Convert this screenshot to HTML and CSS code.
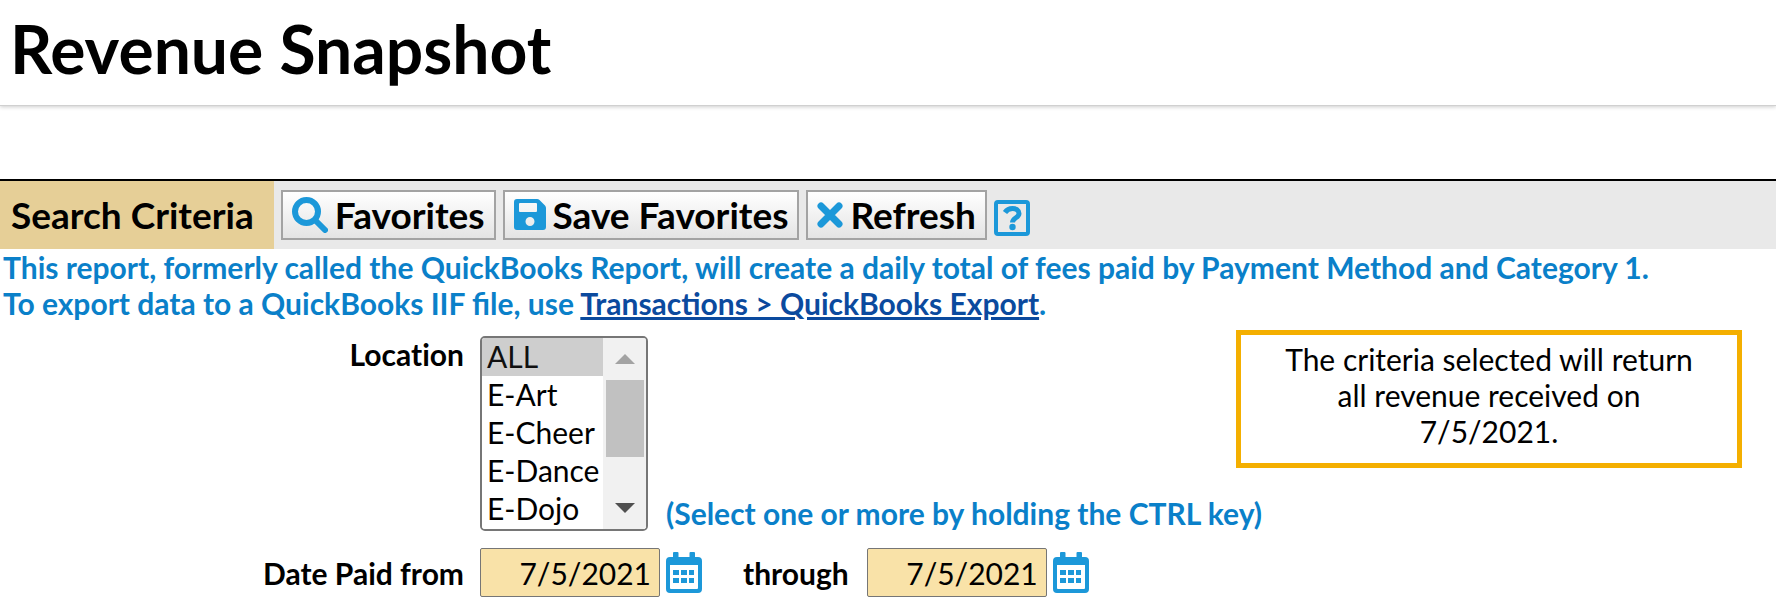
FILE: index.html
```html
<!DOCTYPE html>
<html lang="en">
<head>
  <meta charset="UTF-8" />
  <meta name="viewport" content="width=device-width, initial-scale=1.0"/>
  <title>Revenue Snapshot</title>
  <link rel="stylesheet" href="styles.css">
</head>
<body>
  <header class="page-header">
    <h1>Revenue Snapshot</h1>
  </header>

  <div class="toolbar">
    <h2>Search Criteria</h2>
    <div class="toolbar-actions">
      <button type="button" class="btn">
        <svg width="36" height="36" viewBox="0 0 36 36" aria-hidden="true">
          <circle cx="14.500" cy="14.500" r="11.500" fill="none" stroke="#1c98d9" stroke-width="6"/>
          <path d="M23 23l10 10" stroke="#1c98d9" stroke-width="6" stroke-linecap="round"/>
        </svg>
        <span>Favorites</span>
      </button>
      <button type="button" class="btn">
        <svg width="32" height="36" viewBox="0 0 32 36" aria-hidden="true">
          <path fill="#1c98d9" fill-rule="evenodd" d="M3 2h20q1.500 0 2.500 1l5.500 5.500q1 1 1 2.500v19q0 3-3 3H3q-3 0-3-3V5q0-3 3-3zM6 6q-1 0-1 1v7q0 1 1 1h16q1 0 1-1V7q0-1-1-1zM16 20a4.500 4.500 0 1 0 0 9a4.500 4.500 0 1 0 0-9z"/>
        </svg>
        <span>Save Favorites</span>
      </button>
      <button type="button" class="btn">
        <svg width="26" height="36" viewBox="0 0 26 36" aria-hidden="true">
          <path d="M4 9l18 18M22 9L4 27" stroke="#1c98d9" stroke-width="7" stroke-linecap="round"/>
        </svg>
        <span>Refresh</span>
      </button>
      <a href="#" class="help" aria-label="Help">
        <svg width="36" height="36" viewBox="0 0 36 36" fill="none" stroke="#1c98d9" aria-hidden="true">
          <rect x="2" y="2" width="32" height="32" rx="2" stroke-width="4"/>
          <path d="M11 12.500C13 9.500 15 8.500 18.500 8.500C22 8.500 25 10.500 25 13.500C25 18 18.500 17.500 18.500 22.500" stroke-width="5"/>
          <circle cx="18.500" cy="27" r="3.200" fill="#1c98d9" stroke="none"/>
        </svg>
      </a>
    </div>
  </div>

  <p class="intro">
    This report, formerly called the QuickBooks Report, will create a daily total of fees paid by Payment Method and Category 1.<br>
    To export data to a QuickBooks IIF file, use <a href="#">Transactions &gt; QuickBooks Export</a>.
  </p>

  <div class="criteria">
    <form class="fields">
      <label for="location" class="field-label">Location</label>
      <div class="field field-location">
        <div class="listbox">
          <select id="location" multiple size="5">
            <option selected>ALL</option>
            <option>E-Art</option>
            <option>E-Cheer</option>
            <option>E-Dance</option>
            <option>E-Dojo</option>
            <option>E-Gym</option>
            <option>E-Swim</option>
          </select>
          <div class="scrollbar" aria-hidden="true">
            <svg class="arrow-up" width="20" height="10" viewBox="0 0 20 10"><path d="M0 10L10 0L20 10z"/></svg>
            <div class="track"><div class="thumb"></div></div>
            <svg class="arrow-down" width="20" height="10" viewBox="0 0 20 10"><path d="M0 0L10 10L20 0z"/></svg>
          </div>
        </div>
        <span class="hint">(Select one or more by holding the CTRL key)</span>
      </div>

      <label for="date-from" class="field-label field-label-date">Date Paid from</label>
      <div class="field field-dates">
        <input type="text" id="date-from" value="7/5/2021">
        <button type="button" class="calendar" aria-label="Pick start date">
          <svg width="36" height="42" viewBox="0 0 36 42" fill="#1c98d9" aria-hidden="true">
            <path fill-rule="evenodd" d="M7 1q0-1 1-1h3.500q1 0 1 1v4h11V1q0-1 1-1H28q1 0 1 1v4h3q4 0 4 4v28q0 4-4 4H4q-4 0-4-4V9q0-4 4-4h3zM4 13v23q0 1 1 1h26q1 0 1-1V13z"/>
            <path d="M7 18h6v5H7zM15 18h6v5h-6zM23 18h5v5h-5zM7 26h6v5H7zM15 26h6v5h-6zM23 26h5v5h-5z"/>
          </svg>
        </button>
        <label for="date-to" class="through">through</label>
        <input type="text" id="date-to" value="7/5/2021">
        <button type="button" class="calendar" aria-label="Pick end date">
          <svg width="36" height="42" viewBox="0 0 36 42" fill="#1c98d9" aria-hidden="true">
            <path fill-rule="evenodd" d="M7 1q0-1 1-1h3.500q1 0 1 1v4h11V1q0-1 1-1H28q1 0 1 1v4h3q4 0 4 4v28q0 4-4 4H4q-4 0-4-4V9q0-4 4-4h3zM4 13v23q0 1 1 1h26q1 0 1-1V13z"/>
            <path d="M7 18h6v5H7zM15 18h6v5h-6zM23 18h5v5h-5zM7 26h6v5H7zM15 26h6v5h-6zM23 26h5v5h-5z"/>
          </svg>
        </button>
      </div>
    </form>

    <div class="notice">The criteria selected will return all revenue received on 7/5/2021.</div>
  </div>

  <script>
    const locationList = document.getElementById("location");
    const thumb = document.querySelector(".thumb");

    // keep the drawn thumb in step with the list
    locationList.addEventListener("scroll", () => {
      const range = locationList.scrollHeight - locationList.clientHeight;
      const free = thumb.parentElement.clientHeight - thumb.offsetHeight;
      thumb.style.marginTop = (locationList.scrollTop / range) * free + "px";
    });
  </script>
</body>
</html>
```
FILE: styles.css
```css
* {
  box-sizing: border-box;
}

body {
  margin: 0;
  font-family: Lato, sans-serif;
  font-size: 30px;
  line-height: 36px;
  color: #000;
  background: #fff;
}

svg {
  display: block;
}

.page-header {
  padding: 8px 10px 16px;
  border-bottom: 1px solid #d0d0d0;
  box-shadow: 0 1px 4px rgba(0, 0, 0, 0.2);
}

h1 {
  margin: 0;
  font-size: 66px;
  line-height: 81px;
  font-weight: 700;
}

.toolbar {
  display: flex;
  margin-top: 73px;
  border-top: 2px solid #000;
  background: #e9e9e9;
}

h2 {
  margin: 0;
  padding: 0 20px 0 11px;
  font-size: 37px;
  line-height: 68px;
  font-weight: 700;
  background: #e6cf97;
}

.toolbar-actions {
  display: flex;
  align-items: center;
  gap: 7px;
  padding: 0 7px;
}

.btn {
  display: flex;
  align-items: center;
  gap: 7px;
  height: 50px;
  padding: 0 9px;
  font-family: inherit;
  font-size: 37px;
  line-height: 44px;
  font-weight: 700;
  color: #000;
  background: linear-gradient(#fff, #e4e4e4);
  border: 2px solid #a3a3a3;
  cursor: pointer;
}

.help {
  margin-top: 6px;
}

.intro {
  margin: 0;
  padding: 0 3px;
  font-weight: 700;
  color: #0a80c9;
}

.intro a {
  color: #0b4a9e;
}

/* the notice shares the grid cell with the form, over its empty right side */
.criteria {
  display: grid;
  align-items: start;
  padding-top: 9px;
}

.fields {
  grid-area: 1 / 1;
  display: grid;
  grid-template-columns: 464px 1fr;
  gap: 17px 16px;
  padding-top: 6px;
}

.field-label {
  font-weight: 700;
  font-variant-ligatures: none;
  text-align: right;
}

.field-label-date {
  align-self: center;
}

.field {
  display: flex;
}

.field-location {
  align-items: flex-end;
  gap: 18px;
}

.listbox {
  position: relative;
}

select {
  display: block;
  width: 168px;
  height: 195px;
  padding: 0;
  font-family: inherit;
  font-size: 30px;
  border: 2px solid #767676;
  border-radius: 5px;
  background: #fff;
  overflow-y: scroll;
  scrollbar-width: none;
}

option {
  height: 38px;
  padding: 0 5px;
  line-height: 38px;
}

option:checked {
  background: #cecece linear-gradient(#cecece, #cecece);
}

.scrollbar {
  position: absolute;
  top: 2px;
  right: 2px;
  bottom: 2px;
  display: flex;
  flex-direction: column;
  align-items: center;
  width: 43px;
  padding: 16px 0;
  background: #f1f1f1;
  border-radius: 0 3px 3px 0;
  pointer-events: none;
}

.arrow-up {
  fill: #a3a3a3;
}

.arrow-down {
  fill: #505050;
}

.track {
  flex: 1;
  margin: 16px 0;
}

.thumb {
  width: 38px;
  height: 77px;
  background: #c1c1c1;
}

.hint {
  font-weight: 700;
  color: #0a80c9;
}

.field-dates {
  align-items: center;
  gap: 6px;
}

input {
  width: 180px;
  height: 49px;
  padding: 0 8px;
  font-family: inherit;
  font-size: 30px;
  text-align: right;
  background: #f9e2a8;
  border: 1px solid #767676;
  border-radius: 2px;
}

.calendar {
  padding: 0;
  background: none;
  border: 0;
  cursor: pointer;
}

.through {
  margin: 0 12px 0 35px;
  font-weight: 700;
}

.notice {
  grid-area: 1 / 1;
  justify-self: end;
  width: 506px;
  margin-right: 34px;
  padding: 6px 32px 14px;
  text-align: center;
  border: 5px solid #f4af00;
}
```
